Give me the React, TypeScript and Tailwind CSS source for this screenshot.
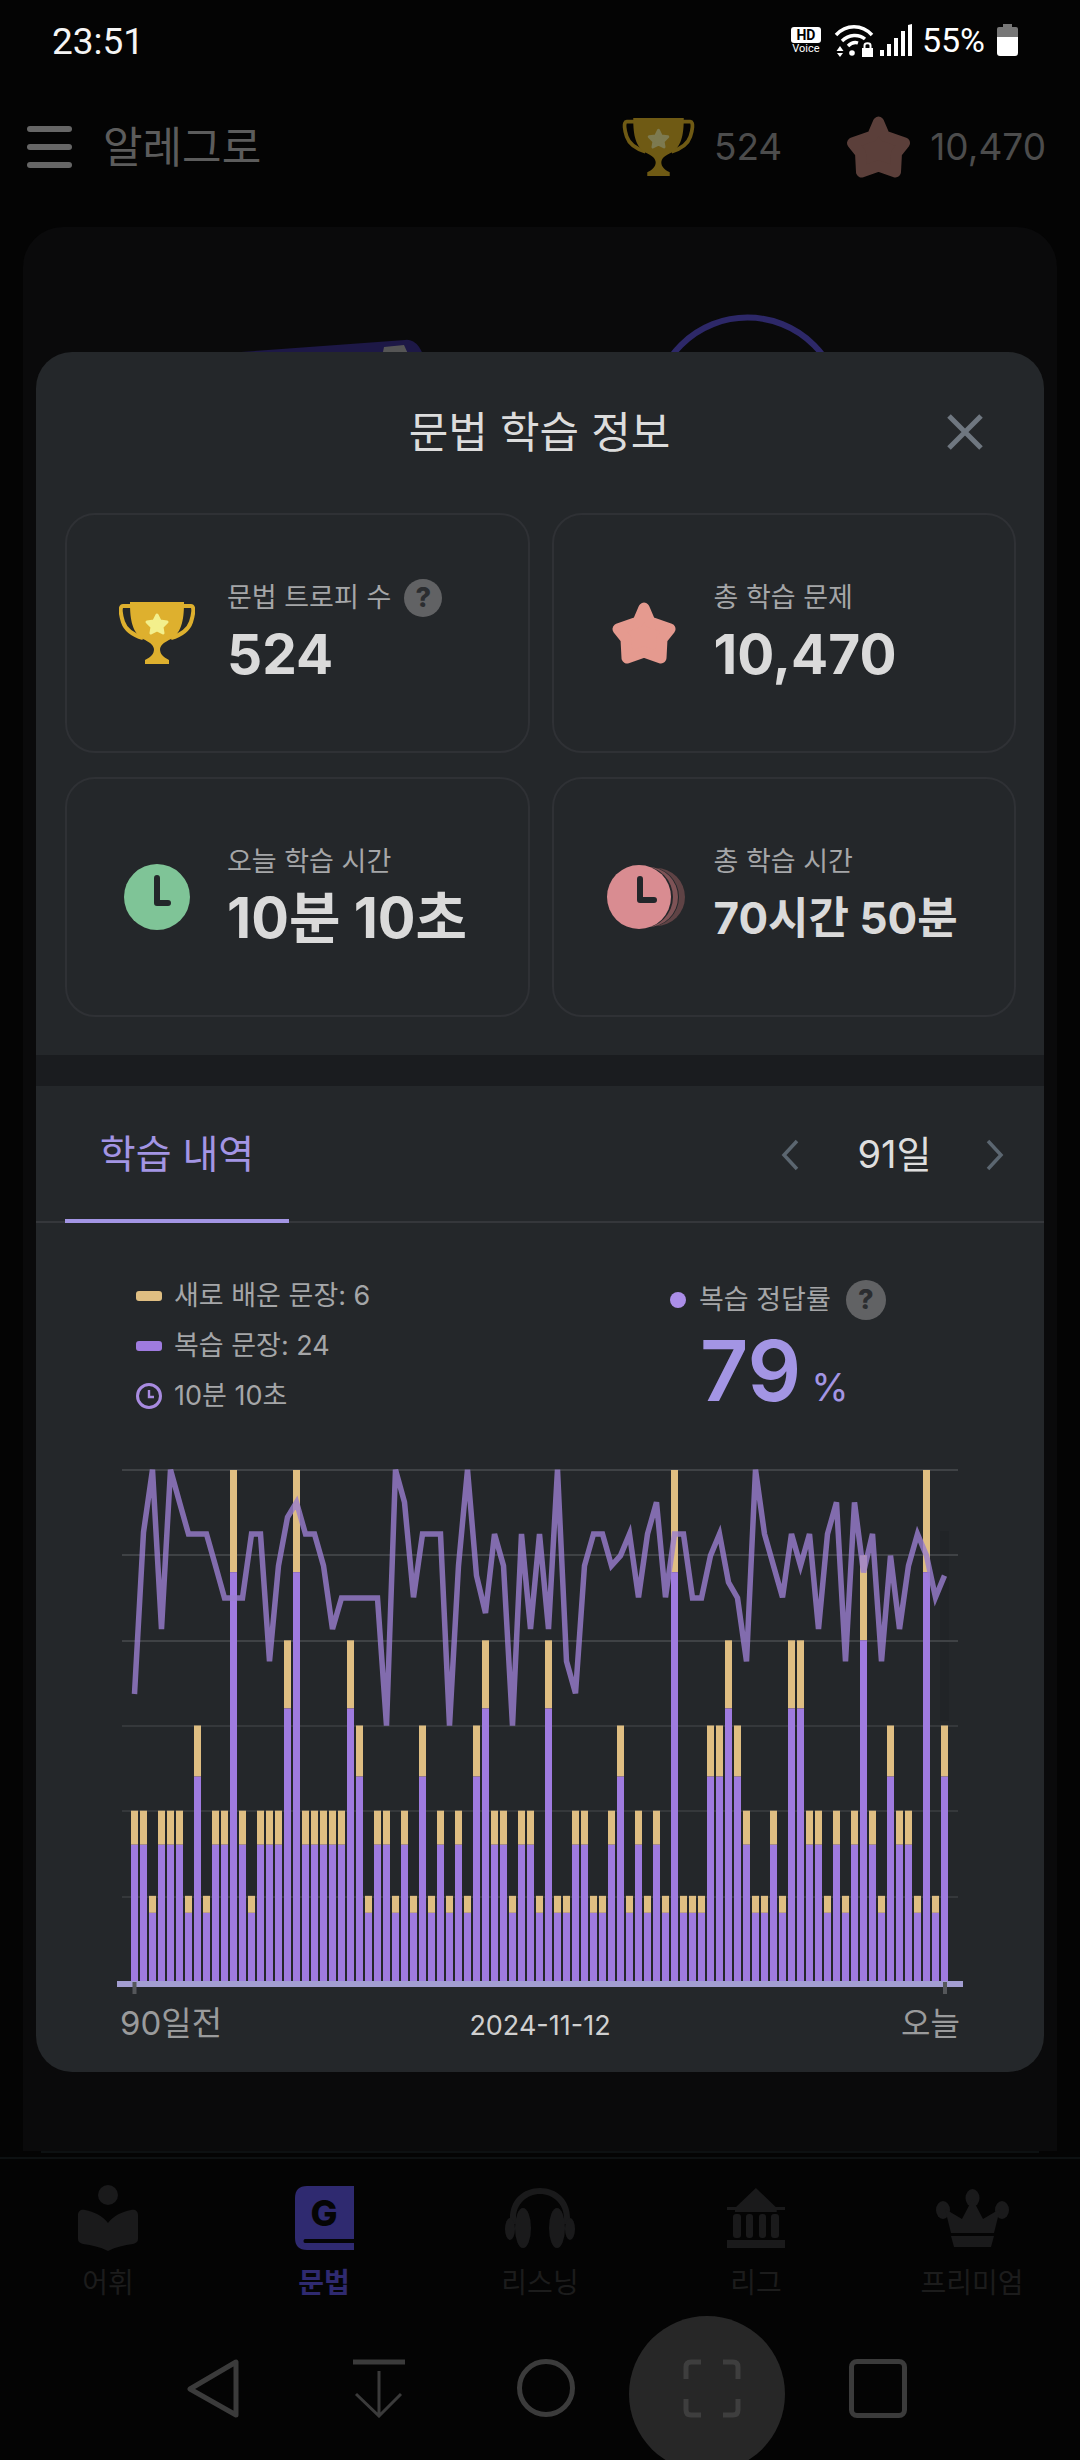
import type { ReactNode } from 'react';

// bar height in multiples of 5 sentences, one per day (91 days)
const LEVELS = [
  2, 2, 1, 2, 2, 2, 1, 3, 1, 2, 2, 6, 2, 1, 2, 2, 2, 4, 6, 2, 2, 2, 2, 2, 4, 3, 1, 2, 2, 1, 2, 1, 3, 1, 2, 1, 2, 1, 3, 4, 2,
  2, 1, 2, 2, 1, 4, 1, 1, 2, 2, 1, 1, 2, 3, 1, 2, 1, 2, 1, 6, 1, 1, 1, 3, 3, 4, 3, 2, 1, 1, 2, 1, 4, 4, 2, 2, 1, 2, 1, 2, 5,
  2, 1, 3, 2, 2, 1, 6, 1, 3,
];

// correct-rate line, y measured in 1/3 px below 1450
const LINE = [
  735, 250, 62, 540, 62, 160, 255, 255, 255, 350, 447, 447, 447, 255, 255, 637, 350, 205, 160, 255, 255, 350, 540, 447, 447,
  447, 447, 447, 830, 62, 160, 445, 255, 255, 255, 830, 350, 62, 380, 492, 255, 350, 830, 255, 540, 255, 540, 62, 637, 733,
  350, 255, 255, 350, 320, 255, 445, 255, 160, 445, 255, 255, 447, 447, 320, 255, 400, 447, 637, 62, 255, 350, 445, 255, 350,
  255, 540, 255, 160, 637, 160, 370, 255, 637, 320, 540, 350, 255, 320, 445, 380,
];

const GRID_Y = [1471, 1556, 1642, 1727, 1812, 1898];

const STAR_POINTS = '32,6 38,20 58,27 50,37 49,56 32,50 15,56 14,37 6,27 26,20';

function Trophy({ cup, star, className }: { cup: string; star: string; className: string }) {
  return (
    <svg viewBox="0 0 76 62" className={className}>
      <path d="M12 4H4C0 4 2 14 4 20C7 29 14 33 24 36" fill="none" stroke={cup} strokeWidth="4" />
      <path d="M64 4H72C76 4 74 14 72 20C69 29 62 33 52 36" fill="none" stroke={cup} strokeWidth="4" />
      <path
        d="M11 0H65C65 14 64 30 52 37C46 40 42 42 41 47C41 52 44 55 50 58V62H26V58C32 55 35 52 35 47C34 42 30 40 24 37C12 30 11 14 11 0Z"
        fill={cup}
      />
      <polygon
        points="38,13 41,19 48,20 43,25 44,31 38,28 32,31 33,25 28,20 35,19"
        fill={star}
        stroke={star}
        strokeWidth="3"
        strokeLinejoin="round"
      />
    </svg>
  );
}

function Star({ color, className }: { color: string; className: string }) {
  return (
    <svg viewBox="0 0 64 62" className={className}>
      <polygon points={STAR_POINTS} fill={color} stroke={color} strokeWidth="11" strokeLinejoin="round" />
    </svg>
  );
}

function Help({ size }: { size: string }) {
  return (
    <span className={`${size} flex items-center justify-center rounded-full bg-[#616264] text-[27px] font-extrabold text-[#2b2d30]`}>
      ?
    </span>
  );
}

function StatCard({ icon, label, help, children }: { icon: ReactNode; label: string; help?: boolean; children: ReactNode }) {
  return (
    <div className="flex h-[240px] items-center rounded-[30px] border-2 border-[#2f3135]">
      <div className="flex w-[160px] shrink-0 items-center justify-center pl-[20px]">{icon}</div>
      <div className="flex flex-col gap-[7px]">
        <div className="flex h-[34px] items-center gap-[13px] text-[27px] leading-[34px] text-[#a5a6a8]">
          {label}
          {help && <Help size="h-[38px] w-[38px]" />}
        </div>
        {children}
      </div>
    </div>
  );
}

function StatusIcons() {
  return (
    <div className="flex items-center">
      <div className="flex w-[30px] flex-col items-center">
        <span className="flex h-[16px] w-[30px] items-center justify-center rounded-[3px] bg-white text-[14px] font-bold leading-none text-black">
          HD
        </span>
        <span className="mt-[1px] text-[11px] leading-[10px] text-white">Voice</span>
      </div>
      <svg viewBox="0 0 40 33" className="ml-[13px] h-[33px] w-[40px]" fill="none" stroke="white" strokeWidth="3.4">
        <path d="M2 11C12 0 28 0 38 11" />
        <path d="M8 17C15 10 25 10 31 15" />
        <path d="M14 22C17 19 21 18 24 19" />
        <path d="M6 22L2.5 27H9.5ZM6 33L2.5 28.5" stroke="none" fill="white" />
        <path d="M3 29H9L6 33Z" stroke="none" fill="white" />
        <circle cx="18" cy="29" r="2.8" fill="white" stroke="none" />
        <rect x="28" y="24" width="11" height="9" fill="white" stroke="none" />
        <path d="M30.5 24V21.5C30.5 18.5 36.5 18.5 36.5 21.5V24" strokeWidth="2" />
      </svg>
      <svg viewBox="0 0 32 32" className="ml-[6px] h-[32px] w-[32px]" fill="white">
        <rect x="0" y="26" width="4" height="6" />
        <rect x="7" y="20" width="4" height="12" />
        <rect x="14" y="14" width="4" height="18" />
        <rect x="21" y="7" width="4" height="25" />
        <path d="M28 32V1L32 0V32Z" />
      </svg>
      <span className="ml-[10px] text-[34px] leading-none text-white">55%</span>
      <div className="ml-[12px] flex h-[32px] w-[21px] flex-col items-center">
        <div className="h-[3px] w-[9px] bg-[#777777]" />
        <div className="h-[10px] w-full rounded-t-[2px] bg-[#777777]" />
        <div className="flex-1 self-stretch rounded-b-[3px] bg-white" />
      </div>
    </div>
  );
}

function Chart() {
  const points = LINE.map((py, i) => `${134.5 + 9 * i},${1450 + py / 3}`).join(' ');
  return (
    <svg viewBox="36 1465 1008 535" className="block h-[535px] w-[1008px] shrink-0">
      <rect x="940" y="1532" width="9" height="190" fill="#212427" />
      {GRID_Y.map((y) => (
        <rect key={y} x="122" y={y - 1} width="836" height="2" fill={y < 1700 ? '#3f4245' : '#35383b'} />
      ))}
      {LEVELS.map((level, i) => {
        const total = level * 85.17;
        const fresh = level * 17.03;
        const x = 131 + 9 * i;
        return (
          <g key={i}>
            <rect x={x} y={1982 - total} width="7" height={fresh} fill="#dfbe82" />
            <rect x={x} y={1982 - total + fresh} width="7" height={total - fresh} fill="#9f7bdf" />
          </g>
        );
      })}
      <polyline points={points} fill="none" stroke="#9a7ed0" strokeOpacity="0.8" strokeWidth="5.5" />
      <rect x="117" y="1982" width="846" height="6" fill="#a39ed2" />
      <rect x="132.5" y="1983" width="4" height="12" fill="#55575a" />
      <rect x="943" y="1983" width="4" height="12" fill="#55575a" />
    </svg>
  );
}

function Modal() {
  return (
    <div className="absolute left-[36px] top-[352px] flex h-[1720px] w-[1008px] flex-col overflow-hidden rounded-[36px] bg-[#24272a]">
      <div className="relative flex h-[161px] shrink-0 items-center justify-center pb-[1px] pr-[1px] text-[43px] text-[#dcdcdc]">
        문법 학습 정보
        <svg viewBox="0 0 36 36" className="absolute right-[61px] top-[62px] h-[36px] w-[36px]" stroke="#6f7780" strokeWidth="5">
          <path d="M2 2L34 34M34 2L2 34" />
        </svg>
      </div>

      <div className="grid shrink-0 grid-cols-2 gap-x-[22px] gap-y-[24px] pl-[29px] pr-[28px]">
        <StatCard icon={<Trophy cup="#deb02e" star="#f3f08c" className="h-[62px] w-[76px]" />} label="문법 트로피 수" help>
          <span className="text-[55px] font-bold leading-[64px] text-[#dadada]">524</span>
        </StatCard>
        <StatCard icon={<Star color="#e59a8f" className="h-[62px] w-[64px]" />} label="총 학습 문제">
          <span className="text-[55px] font-bold leading-[64px] text-[#dadada]">10,470</span>
        </StatCard>
        <StatCard
          icon={
            <svg viewBox="0 0 66 66" className="h-[66px] w-[66px]">
              <circle cx="33" cy="33" r="33" fill="#7fc497" />
              <path d="M33 14V39H44" fill="none" stroke="#23262a" strokeWidth="6" strokeLinecap="round" strokeLinejoin="round" />
            </svg>
          }
          label="오늘 학습 시간"
        >
          <span className="text-[56px] font-bold leading-[64px] text-[#dadada]">10분 10초</span>
        </StatCard>
        <StatCard
          icon={
            <svg viewBox="0 0 82 66" className="ml-[9px] h-[66px] w-[82px]">
              <circle cx="49" cy="33" r="29" fill="#5f4345" />
              <circle cx="42" cy="33" r="30" fill="#24272a" />
              <circle cx="41" cy="33" r="30" fill="#7e5356" />
              <circle cx="35" cy="33" r="31" fill="#24272a" />
              <circle cx="32" cy="33" r="32" fill="#d98c91" />
              <path d="M33 15V36H47" fill="none" stroke="#23262a" strokeWidth="6" strokeLinecap="round" strokeLinejoin="round" />
            </svg>
          }
          label="총 학습 시간"
        >
          <span className="text-[44px] font-bold leading-[64px] text-[#dadada]">70시간 50분</span>
        </StatCard>
      </div>

      <div className="mt-[38px] h-[31px] shrink-0 bg-[#1a1c1f]" />

      <div className="flex h-[137px] shrink-0 items-stretch justify-between border-b-2 border-[#35373b]">
        <div className="-mb-[2px] ml-[29px] flex w-[224px] items-center justify-center border-b-4 border-[#a395e4] pt-[3px] text-[39px] text-[#a395e4]">
          학습 내역
        </div>
        <div className="flex items-center pr-[40px] pt-[2px]">
          <svg viewBox="0 0 18 32" className="h-[32px] w-[18px]" fill="none" stroke="#5b6670" strokeWidth="3.5">
            <path d="M16 2L3 16L16 30" />
          </svg>
          <span className="w-[187px] pl-[4px] text-center text-[38px] text-[#dedede]">91일</span>
          <svg viewBox="0 0 18 32" className="h-[32px] w-[18px]" fill="none" stroke="#5b6670" strokeWidth="3.5">
            <path d="M2 2L15 16L2 30" />
          </svg>
        </div>
      </div>

      <div className="flex h-[241px] shrink-0 pl-[100px] pt-[48px] text-[27px] text-[#a5a6a8]">
        <div className="w-[534px]">
          <div className="flex h-[50px] items-center gap-[12px]">
            <span className="h-[10px] w-[26px] rounded-[3px] bg-[#dfbe82]" />
            새로 배운 문장: 6
          </div>
          <div className="flex h-[50px] items-center gap-[12px]">
            <span className="h-[10px] w-[26px] rounded-[3px] bg-[#9f7bdf]" />
            복습 문장: 24
          </div>
          <div className="flex h-[50px] items-center gap-[12px]">
            <svg viewBox="0 0 26 26" className="h-[26px] w-[26px]" fill="none" stroke="#a88be0" strokeWidth="3">
              <circle cx="13" cy="13" r="11.5" />
              <path d="M13 7V14H18" strokeWidth="2.4" />
            </svg>
            10분 10초
          </div>
        </div>
        <div className="mt-[9px] flex flex-col">
          <div className="flex h-[40px] items-center">
            <span className="h-[16px] w-[16px] rounded-full bg-[#ab8ee8]" />
            <span className="ml-[13px]">복습 정답률</span>
            <span className="ml-[15px]">
              <Help size="h-[40px] w-[40px]" />
            </span>
          </div>
          <div className="ml-[30px] mt-[6px] flex items-baseline text-[#a395e4]">
            <span className="text-[84px] font-semibold leading-[90px]">79</span>
            <span className="ml-[10px] text-[38px]">%</span>
          </div>
        </div>
      </div>

      <Chart />

      <div className="grid h-[40px] shrink-0 grid-cols-3 items-center px-[84px] pb-[6px]">
        <span className="text-[33px] text-[#9a9b9c]">90일전</span>
        <span className="pt-[4px] text-center text-[27px] text-[#d0d0d0]">2024-11-12</span>
        <span className="text-right text-[32px] text-[#9a9b9c]">오늘</span>
      </div>
    </div>
  );
}

function TabItem({ label, active, children }: { label: string; active?: boolean; children: ReactNode }) {
  return (
    <div className="flex flex-col items-center">
      <div className="flex h-[66px] items-center justify-center">{children}</div>
      <span className={`mt-[15px] text-[28px] leading-[34px] ${active ? 'font-bold text-[#2f2a70]' : 'text-[#1c1c1c]'}`}>{label}</span>
    </div>
  );
}

function TabBar() {
  return (
    <div className="grid h-[159px] shrink-0 grid-cols-5 border-t-2 border-[#0d1112] pt-[26px]">
      <TabItem label="어휘">
        <svg viewBox="0 0 60 66" className="h-[66px] w-[60px]" fill="#1a1a1b">
          <ellipse cx="30" cy="10" rx="10" ry="10" />
          <path d="M0 30C0 26 3 24 7 25C16 27 24 30 30 38C36 30 44 27 53 25C57 24 60 26 60 30V54C60 57 58 58 55 59C46 60 38 62 30 66C22 62 14 60 5 59C2 58 0 57 0 54Z" />
        </svg>
      </TabItem>
      <TabItem label="문법" active>
        <div className="relative h-[64px] w-[59px]">
          <svg viewBox="0 0 59 64" className="h-[64px] w-[59px]" fill="#2f2a70">
            <path d="M12 0H59V64H12C4 64 0 60 0 52V12C0 4 4 0 12 0Z" />
            <path d="M10 53H59V57H10C8 57 8 53 10 53Z" fill="#050505" />
          </svg>
          <span className="absolute left-[16px] top-[6px] text-[36px] font-extrabold leading-[42px] text-[#050505]">G</span>
        </div>
      </TabItem>
      <TabItem label="리스닝">
        <svg viewBox="0 0 70 60" className="h-[60px] w-[70px]" fill="#1a1a1b">
          <path d="M5 36V30C5 12 18 0 35 0C52 0 65 12 65 30V36H59V30C59 16 48 6 35 6C22 6 11 16 11 30V36Z" />
          <ellipse cx="18" cy="40" rx="8" ry="20" />
          <ellipse cx="52" cy="40" rx="8" ry="20" />
          <ellipse cx="5" cy="41" rx="5" ry="11" />
          <ellipse cx="65" cy="41" rx="5" ry="11" />
        </svg>
      </TabItem>
      <TabItem label="리그">
        <svg viewBox="0 0 58 60" className="h-[60px] w-[58px]" fill="#1a1a1b">
          <path d="M29 0L58 20V24H0V20Z" transform="translate(8 0) scale(0.72 1)" />
          <path d="M0 19H58V22H0Z" />
          <rect x="6" y="26" width="8" height="24" rx="3" />
          <rect x="19" y="26" width="7" height="24" rx="3" />
          <rect x="32" y="26" width="7" height="24" rx="3" />
          <rect x="44" y="26" width="8" height="24" rx="3" />
          <rect x="0" y="52" width="58" height="8" />
        </svg>
      </TabItem>
      <TabItem label="프리미엄">
        <svg viewBox="0 0 73 58" className="h-[58px] w-[73px]" fill="#1a1a1b">
          <ellipse cx="36.5" cy="9" rx="7" ry="9" />
          <ellipse cx="7" cy="21" rx="7" ry="9" />
          <ellipse cx="66" cy="21" rx="7" ry="9" />
          <path d="M36.5 10L47 30L64 20L58 44H15L9 20L26 30Z" />
          <path d="M15 47H58L55 58H18Z" />
        </svg>
      </TabItem>
    </div>
  );
}

function NavBar() {
  return (
    <div className="flex h-[144px] shrink-0 items-center pl-[187px]">
      <svg viewBox="0 0 52 59" className="h-[59px] w-[52px]" fill="none" stroke="#3b3b3b" strokeWidth="5" strokeLinejoin="round">
        <path d="M49 3V56L3 30Z" />
      </svg>
      <svg viewBox="0 0 52 59" className="ml-[114px] h-[59px] w-[52px]" fill="none" stroke="#3b3b3b">
        <path d="M0 3H52" strokeWidth="5" />
        <path d="M26 12V56M3 35L26 57L48 35" strokeWidth="3" />
      </svg>
      <div className="ml-[112px] h-[58px] w-[58px] rounded-full border-[5px] border-[#3b3b3b]" />
      <div className="relative ml-[108px] h-[59px] w-[58px]">
        <div className="absolute left-[-54px] top-[-43px] h-[156px] w-[156px] rounded-full bg-[#272727]" />
        <svg viewBox="0 0 58 59" className="relative h-[59px] w-[58px]" fill="none" stroke="#3e3e3e" strokeWidth="5">
          <path d="M3 20V8Q3 3 8 3H18M40 3H50Q55 3 55 8V20M55 40V51Q55 56 50 56H40M18 56H8Q3 56 3 51V40" />
        </svg>
      </div>
      <div className="ml-[108px] h-[59px] w-[58px] rounded-[8px] border-[5px] border-[#3b3b3b]" />
    </div>
  );
}

export default function App() {
  return (
    <div className="relative flex h-[2460px] w-[1080px] flex-col overflow-hidden bg-[#040404] [font-family:Inter,'Noto_Sans_CJK_KR',sans-serif]">
      {/* Status bar */}
      <div className="flex h-[80px] shrink-0 items-center justify-between pl-[52px] pr-[62px] [font-family:Roboto,sans-serif]">
        <span className="pt-[2px] text-[37px] leading-none text-[#f5f5f5]">23:51</span>
        <StatusIcons />
      </div>

      {/* App header, dimmed */}
      <div className="flex h-[134px] shrink-0 items-center pl-[27px] pr-[34px]">
        <div className="flex w-[45px] flex-col gap-[12px]">
          <div className="h-[6px] rounded-full bg-[#666666]" />
          <div className="h-[6px] rounded-full bg-[#666666]" />
          <div className="h-[6px] rounded-full bg-[#666666]" />
        </div>
        <span className="ml-[31px] text-[43px] text-[#5c5c5c]">알레그로</span>
        <div className="ml-auto flex items-center">
          <Trophy cup="#6f5a14" star="#7d7a50" className="h-[58px] w-[73px]" />
          <span className="ml-[19px] text-[37px] text-[#4c4c4c]">524</span>
          <Star color="#5b3f3a" className="ml-[64px] h-[62px] w-[65px]" />
          <span className="ml-[19px] text-[37px] text-[#4c4c4c]">10,470</span>
        </div>
      </div>

      <div className="mx-[23px] mt-[13px] flex-1 rounded-t-[40px] bg-[#0a0a0b]">
        <svg viewBox="23 227 1034 140" className="block h-[140px] w-[1034px]">
          <path d="M241 352L405 340Q420 338 427 367H241Z" fill="#1d1846" />
          <path d="M380 367L384 347L404 345L414 367Z" fill="#555555" />
          <circle cx="747.5" cy="411.5" r="94" fill="none" stroke="#2d2868" strokeWidth="6" />
        </svg>
      </div>

      <div className="mx-[41px] h-[2px] shrink-0 bg-[#0d1112]" />
      <div className="h-[4px] shrink-0" />

      <TabBar />
      <NavBar />
      <Modal />
    </div>
  );
}
